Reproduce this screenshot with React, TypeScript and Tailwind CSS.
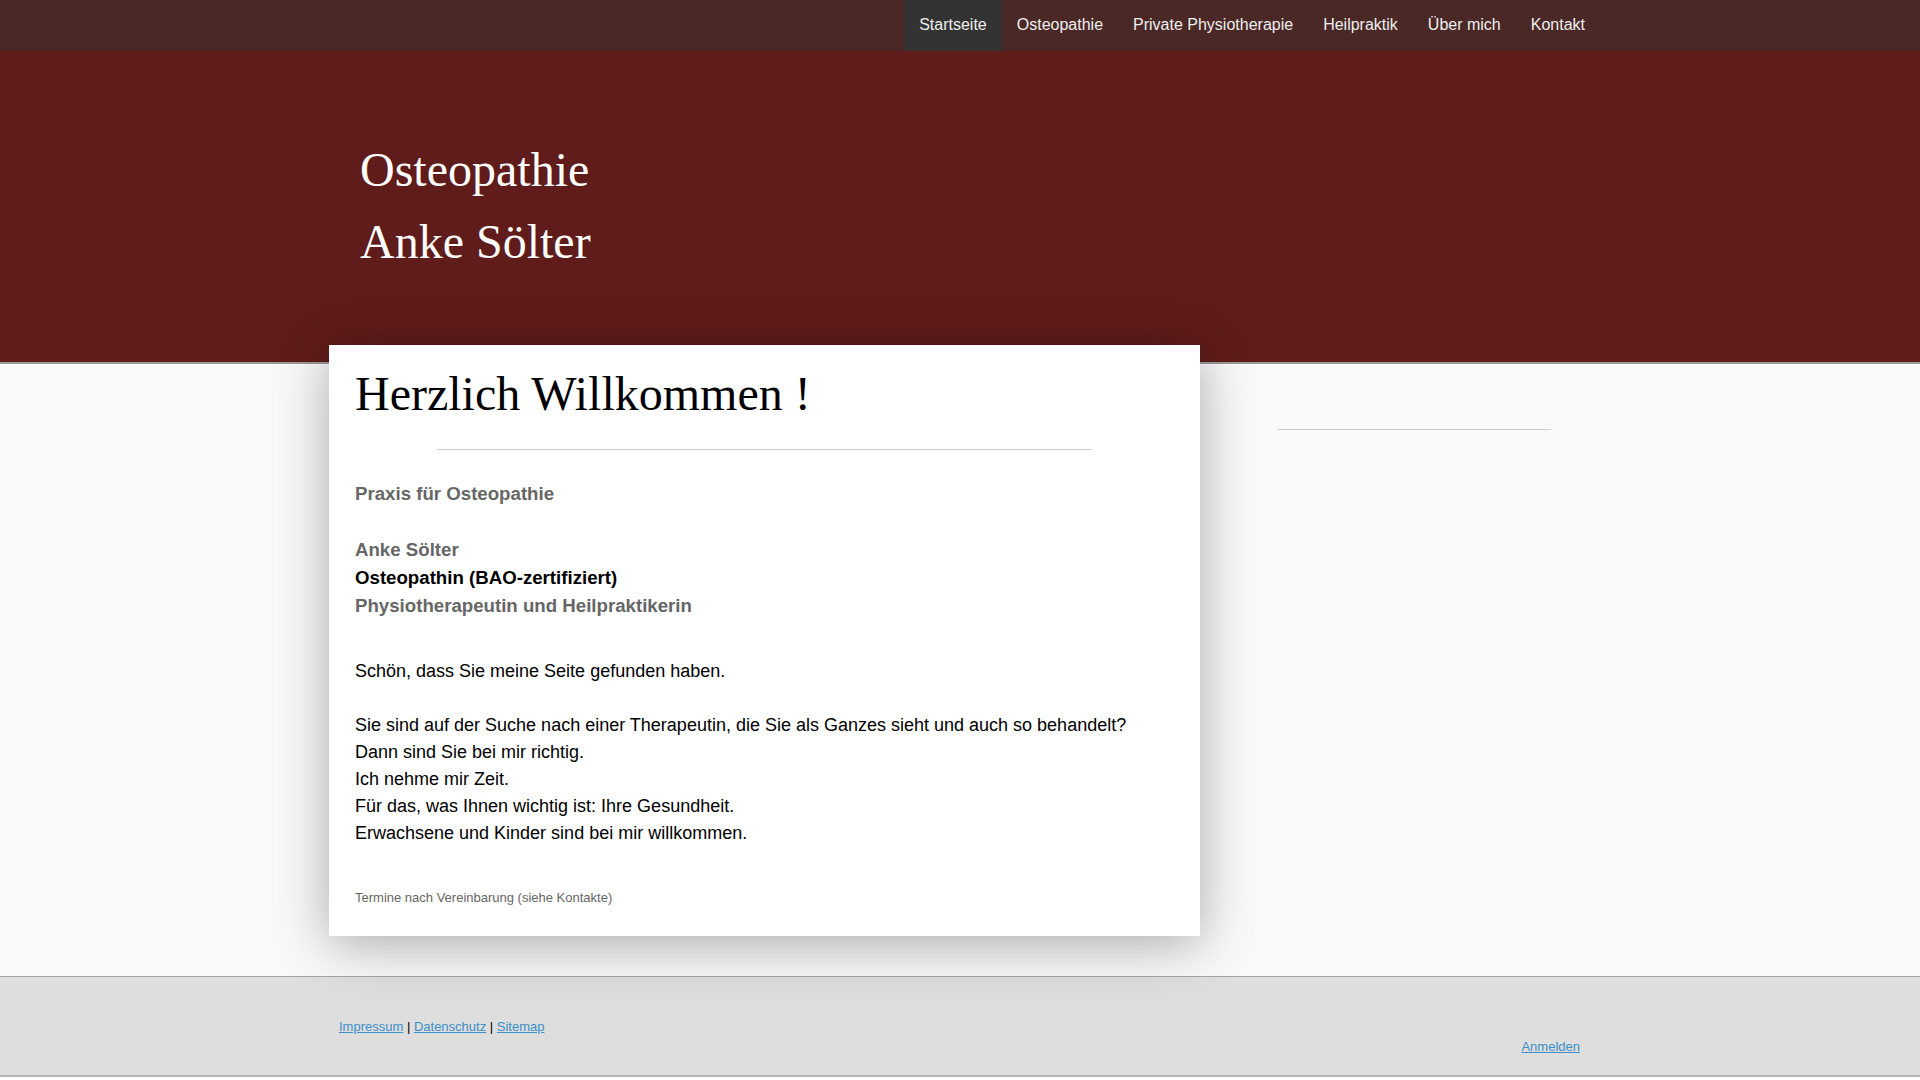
export default function App() {
  const navItems = [
    "Startseite",
    "Osteopathie",
    "Private Physiotherapie",
    "Heilpraktik",
    "Über mich",
    "Kontakt",
  ];

  return (
    <div className="min-h-screen bg-white font-['Liberation_Sans',Arial,sans-serif]">
      {/* top navigation */}
      <nav className="h-[51px] bg-[#4a2826]">
        <div className="mx-auto flex h-full w-[1280px] justify-end">
          {navItems.map((item, i) => (
            <a
              key={item}
              href="#"
              className={
                i === 0
                  ? "flex h-full items-center bg-[#333333] px-[15px] pb-[1px] text-[16px] text-[#eeeeee]"
                  : "flex h-full items-center px-[15px] pb-[1px] text-[16px] text-[#eeeeee]"
              }
            >
              {item}
            </a>
          ))}
        </div>
      </nav>

      {/* header */}
      <header className="h-[313px] border-b-2 border-[#9a9a9a] bg-[#5f1c1a]">
        <div className="mx-auto w-[1280px] pl-[40px] pt-[83px]">
          <h1 className="font-['Liberation_Serif','Times_New_Roman',serif] text-[48px] leading-[72px] text-white">
            Osteopathie
            <br />
            Anke Sölter
          </h1>
        </div>
      </header>

      {/* main */}
      <main className="border-b border-[#a5a5a5] bg-[#f9f9f9]">
        <div className="mx-auto flex w-[1280px] items-start">
          <article className="relative z-10 ml-[9px] -mt-[19px] mb-[40px] w-[871px] bg-white px-[26px] pb-[28px] pt-[20px] shadow-[0_8px_50px_rgba(0,0,0,0.32)]">
            <h2 className="font-['Liberation_Serif','Times_New_Roman',serif] text-[48px] leading-[58px] text-black">
              Herzlich Willkommen !
            </h2>
            <hr className="mx-auto mt-[26px] w-[80%] border-t border-[#cccccc]" />

            <div className="mt-[30px] text-[18.67px] font-bold leading-[28px]">
              <p className="text-[#666666]">Praxis für Osteopathie</p>
              <p className="h-[28px]" />
              <p className="text-[#666666]">Anke Sölter</p>
              <p className="text-black">Osteopathin (BAO-zertifiziert)</p>
              <p className="text-[#666666]">Physiotherapeutin und Heilpraktikerin</p>
            </div>

            <div className="mt-[38px] text-[18px] leading-[27px] text-black">
              <p>Schön, dass Sie meine Seite gefunden haben.</p>
              <p className="h-[27px]" />
              <p>Sie sind auf der Suche nach einer Therapeutin, die Sie als Ganzes sieht und auch so behandelt?</p>
              <p>Dann sind Sie bei mir richtig.</p>
              <p>Ich nehme mir Zeit.</p>
              <p>Für das, was Ihnen wichtig ist: Ihre Gesundheit.</p>
              <p>Erwachsene und Kinder sind bei mir willkommen.</p>
            </div>

            <p className="mt-[41px] text-[13px] leading-[20px] text-[#666666]">
              Termine nach Vereinbarung (siehe Kontakte)
            </p>
          </article>

          {/* sidebar */}
          <aside className="ml-[78px] mt-[65px] w-[273px]">
            <hr className="border-t border-[#cccccc]" />
          </aside>
        </div>
      </main>

      {/* footer */}
      <footer className="h-[100px] border-b-2 border-[#b5b5b5] bg-[#dedede]">
        <div className="mx-auto flex w-[1280px] items-start justify-between pl-[19px] pr-[20px] pt-[41px]">
          <p className="text-[13px] leading-[18px] text-black">
            <a href="#" className="text-[#3b8ec6] underline">Impressum</a>
            {" | "}
            <a href="#" className="text-[#3b8ec6] underline">Datenschutz</a>
            {" | "}
            <a href="#" className="text-[#3b8ec6] underline">Sitemap</a>
          </p>
          <a href="#" className="mt-[20px] text-[13px] leading-[18px] text-[#3b8ec6] underline">
            Anmelden
          </a>
        </div>
      </footer>
    </div>
  );
}
